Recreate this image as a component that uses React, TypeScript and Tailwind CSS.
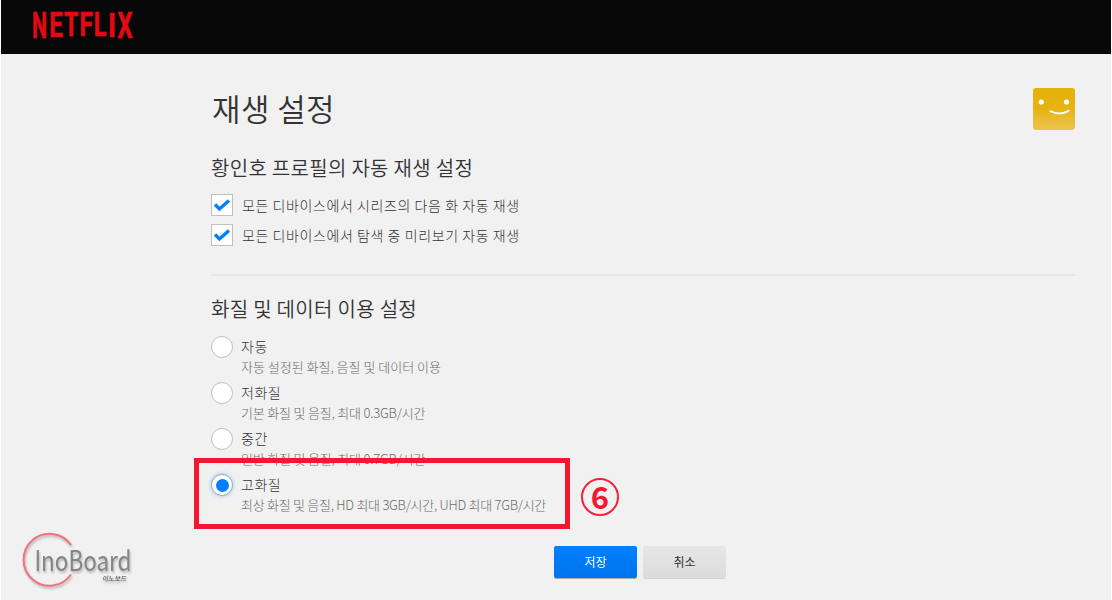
import React from 'react';

const AUTOPLAY = [
  '모든 디바이스에서 시리즈의 다음 화 자동 재생',
  '모든 디바이스에서 탐색 중 미리보기 자동 재생',
];

const QUALITY = [
  { label: '자동', detail: '자동 설정된 화질, 음질 및 데이터 이용', tracking: '' },
  { label: '저화질', detail: '기본 화질 및 음질, 최대 0.3GB/시간', tracking: 'tracking-[-0.19px]' },
  { label: '중간', detail: '일반 화질 및 음질, 최대 0.7GB/시간', tracking: 'tracking-[-0.19px]' },
  {
    label: '고화질',
    detail: '최상 화질 및 음질, HD 최대 3GB/시간, UHD 최대 7GB/시간',
    tracking: 'tracking-[-0.26px]',
    selected: true,
  },
];

// x, width and size of each wordmark letter; the bottoms follow an arc
const LETTERS = [
  { char: 'N', x: 0.1, width: 15, size: 36.5, base: 26.4 },
  { char: 'E', x: 17.2, width: 13.6, size: 34.5, base: 24.9 },
  { char: 'T', x: 32, width: 14.3, size: 33.7, base: 24.3 },
  { char: 'F', x: 47.6, width: 13.3, size: 32.7, base: 23.6 },
  { char: 'L', x: 61.7, width: 12.7, size: 33, base: 23.8 },
  { char: 'I', x: 76, width: 8, size: 34, base: 24.5 },
  { char: 'X', x: 85.4, width: 15, size: 36.5, base: 26.4 },
];

const Wordmark: React.FC = () => (
  <svg
    className="block overflow-visible"
    width="102"
    height="28"
    viewBox="0 0 102 28"
    fill="#e50914"
    stroke="#e50914"
    strokeWidth="0.6"
  >
    {LETTERS.map((l) => (
      <text
        key={l.char}
        x={l.x}
        y={l.base}
        fontSize={l.size}
        textLength={l.width}
        lengthAdjust="spacingAndGlyphs"
        className="font-['Roboto',sans-serif] font-bold"
      >
        {l.char}
      </text>
    ))}
  </svg>
);

const Avatar: React.FC = () => (
  <svg className="block" width="42" height="42" viewBox="0 0 42 42">
    <defs>
      <linearGradient id="avatar" x1="0" y1="0" x2="0" y2="1">
        <stop offset="0" stopColor="#e5b009" />
        <stop offset="0.5" stopColor="#e6b313" />
        <stop offset="1" stopColor="#ebc552" />
      </linearGradient>
    </defs>
    <rect width="42" height="42" rx="3" fill="url(#avatar)" />
    <circle cx="8.3" cy="14" r="2.6" fill="#fff" />
    <circle cx="33.5" cy="14" r="2.6" fill="#fff" />
    <path d="M17.5 23.2 Q26.5 28 35.5 22.8" fill="none" stroke="#fff" strokeWidth="2" strokeLinecap="round" />
  </svg>
);

const Watermark: React.FC = () => (
  <svg
    className="absolute left-5 top-[528px] overflow-visible drop-shadow-[1px_2px_1px_rgba(0,0,0,0.25)]"
    width="120"
    height="64"
    viewBox="0 0 120 64"
  >
    <path d="M50 17 A26 26 0 1 0 50 46.5" fill="none" stroke="#f3717f" strokeWidth="2" />
    <text
      x="13.5"
      y="43"
      fontSize="28"
      textLength="97"
      lengthAdjust="spacingAndGlyphs"
      fill="#858585"
      className="font-['Noto_Sans_CJK_KR',sans-serif] font-normal"
    >
      InoBoard
    </text>
    <text
      x="81"
      y="52.5"
      fontSize="6.5"
      textLength="24"
      lengthAdjust="spacingAndGlyphs"
      fill="#777"
      className="font-['Noto_Sans_CJK_KR',sans-serif] font-bold italic"
    >
      이노보드
    </text>
  </svg>
);

const App: React.FC = () => {
  return (
    <div className="relative h-[600px] w-[1112px] overflow-hidden whitespace-nowrap border-x border-white bg-[#f1f1f1] font-['Noto_Sans_CJK_KR',sans-serif] font-light text-[#333]">
      <header className="h-[54px] bg-[#080808] pl-[31px] pt-3">
        <Wordmark />
      </header>

      <main className="ml-[210px] w-[864px]">
        <div className="flex h-[95px] items-start justify-between pt-[34px]">
          <h1 className="mt-[-1px] pl-px text-[31px] font-[350] leading-[42px] tracking-[0.4px]">재생 설정</h1>
          <Avatar />
        </div>

        <section className="h-[127px] border-b-2 border-[#e5e5e5]">
          <h2 className="h-[45px] pt-[5px] text-[20px] font-[350] leading-[28px] tracking-[0.3px]">
            황인호 프로필의 자동 재생 설정
          </h2>
          {AUTOPLAY.map((text) => (
            <label key={text} className="mb-2 flex h-[22px] items-center gap-[9px]">
              <span className="flex h-[22px] w-[22px] items-center justify-center border border-[#bfbfbf] bg-white">
                <svg width="18" height="14" viewBox="0 0 18 14">
                  <path d="M2 6.5 L6.5 11 L16 2.5" fill="none" stroke="#0080ff" strokeWidth="3.4" />
                </svg>
              </span>
              <span className="text-[14px] tracking-[0.58px]">{text}</span>
            </label>
          ))}
        </section>

        <section className="h-[270px] pt-[19px]">
          <h2 className="h-[41px] text-[20px] font-[350] leading-[28px] tracking-[0.3px]">화질 및 데이터 이용 설정</h2>
          {QUALITY.map((q) => (
            <label key={q.label} className="flex h-[46px] items-start gap-2">
              <span
                className={
                  q.selected
                    ? 'flex h-[22px] w-[22px] items-center justify-center rounded-full border border-[#a6a6a6] bg-white shadow-[0_0_4px_#90c6ff]'
                    : 'h-[22px] w-[22px] rounded-full border border-[#bfbfbf] bg-white'
                }
              >
                {q.selected && <span className="h-[13px] w-[13px] rounded-full bg-[#0080ff]" />}
              </span>
              <span>
                <span className="block pb-0.5 text-[14px] leading-[20px] tracking-[0.5px]">{q.label}</span>
                <span className={`block text-[13px] leading-[18px] text-[#6b6b6b] ${q.tracking}`}>{q.detail}</span>
              </span>
            </label>
          ))}
        </section>

        <div className="flex gap-[6px] pl-[343px] text-[12px] font-normal">
          <button className="h-8 w-[83px] rounded-xs bg-linear-to-b from-[#0080ff] to-[#0074ea] text-white shadow-[0_1px_0_rgba(0,0,0,0.3)]">
            저장
          </button>
          <button className="h-8 w-[83px] rounded-xs bg-linear-to-b from-[#e6e6e6] to-[#dcdcdc] shadow-[0_1px_0_rgba(0,0,0,0.12)]">
            취소
          </button>
        </div>
      </main>

      <div className="absolute left-[193px] top-[458px] h-[71px] w-[376px] border-5 border-[#f5172f]" />
      <div className="absolute left-[580px] top-[478px] flex h-[38px] w-[38px] items-center justify-center rounded-full border-2 border-[#f5213a] pb-[4px] text-[31px] font-bold leading-none text-[#f5172f]">
        6
      </div>
      <Watermark />
    </div>
  );
};

export default App;
